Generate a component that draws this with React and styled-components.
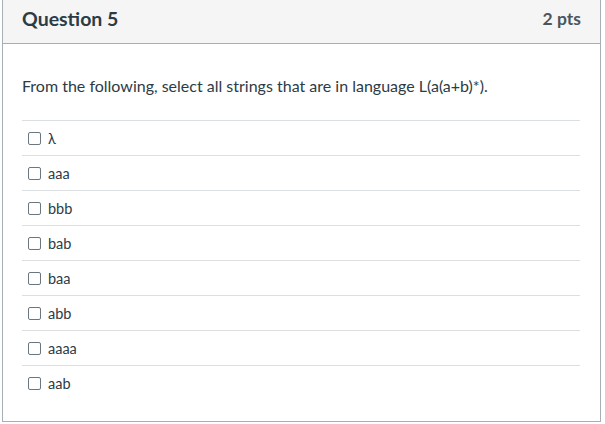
import React from "react";
import styled, { createGlobalStyle } from "styled-components";

const GlobalStyle = createGlobalStyle`
  body {
    margin: 0;
    background: #fff;
    font-family: Lato, "Open Sans", sans-serif;
    color: #2d3b45;
  }
`;

const Card = styled.div`
  margin-left: 2px;
  width: 599px;
  height: 422px;
  box-sizing: border-box;
  border: 1px solid #a5afb5;
  border-top: none;
  display: flex;
  flex-direction: column;
`;

const Header = styled.div`
  height: 44px;
  box-sizing: border-box;
  background: #f5f5f5;
  border-bottom: 1px solid #a5afb5;
  display: flex;
  align-items: center;
  justify-content: space-between;
  padding: 0 19px 6px 19px;
`;

const Title = styled.h2`
  margin: 0;
  font-size: 19.5px;
  font-weight: 700;
  color: #2d3b45;
`;

const Points = styled.div`
  font-size: 17.5px;
  font-weight: 700;
  color: #4a555c;
`;

const Body = styled.div`
  padding: 32px 20px 20px 19px;
`;

const Prompt = styled.p`
  margin: 0 0 24px 0;
  font-size: 16px;
  line-height: 20px;
`;

const Answers = styled.div`
  display: flex;
  flex-direction: column;
`;

const Answer = styled.label`
  height: 35px;
  box-sizing: border-box;
  border-top: 1px solid #dcdfe1;
  display: flex;
  align-items: center;
  padding-left: 6px;
  gap: 7px;
  font-size: 14.5px;
  cursor: pointer;
`;

const Box = styled.input.attrs({ type: "checkbox" })`
  appearance: none;
  margin: 0;
  width: 13px;
  height: 13px;
  border: 1px solid #6b7780;
  border-radius: 2px;
  background: #fff;
`;

const answers = ["λ", "aaa", "bbb", "bab", "baa", "abb", "aaaa", "aab"];

export default function App() {
  return (
    <>
      <GlobalStyle />
      <Card>
        <Header>
          <Title>Question 5</Title>
          <Points>2 pts</Points>
        </Header>
        <Body>
          <Prompt>
            From the following, select all strings that are in language
            L(a(a+b)*).
          </Prompt>
          <Answers>
            {answers.map(a => (
              <Answer key={a}>
                <Box />
                <span>{a}</span>
              </Answer>
            ))}
          </Answers>
        </Body>
      </Card>
    </>
  );
}
